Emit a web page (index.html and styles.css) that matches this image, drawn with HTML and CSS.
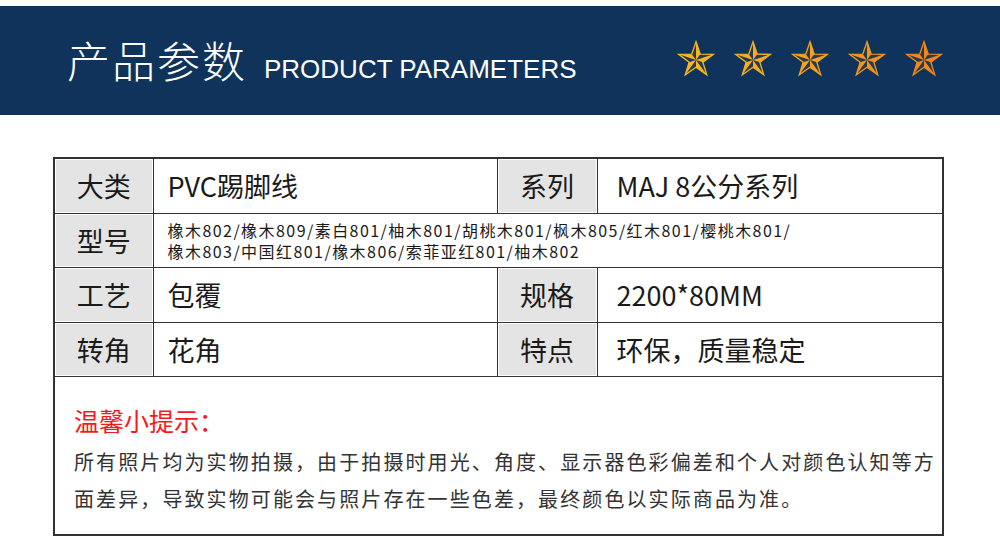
FILE: index.html
```html
<!DOCTYPE html>
<html lang="zh-CN">
<head>
<meta charset="utf-8">
<title>产品参数</title>
<link rel="stylesheet" href="styles.css">
</head>
<body>
<header class="banner">
  <div class="banner-title">
    <h1 class="title-cn">产品参数</h1>
    <span class="title-en">PRODUCT PARAMETERS</span>
  </div>
  <div class="stars">
    <svg class="star s1" viewBox="-50 -50 100 100">
      <path class="star-dark" d="M0 0L0 -48L-11.17 -15.37Z M0 0L45.65 -14.83L11.17 -15.37Z M0 0L28.21 38.83L18.07 5.87Z M0 0L-28.21 38.83L0 19Z M0 0L-45.65 -14.83L-18.07 5.87Z"/>
      <path class="star-half" d="M0 0L0 -48L11.17 -15.37Z M0 0L45.65 -14.83L18.07 5.87Z M0 0L28.21 38.83L0 19Z M0 0L-28.21 38.83L-18.07 5.87Z M0 0L-45.65 -14.83L-11.17 -15.37Z"/>
      <polygon class="star-outline" points="0,-48 11.17,-15.37 45.65,-14.83 18.07,5.87 28.21,38.83 0,19 -28.21,38.83 -18.07,5.87 -45.65,-14.83 -11.17,-15.37"/>
    </svg>
    <svg class="star s2" viewBox="-50 -50 100 100">
      <path class="star-dark" d="M0 0L0 -48L-11.17 -15.37Z M0 0L45.65 -14.83L11.17 -15.37Z M0 0L28.21 38.83L18.07 5.87Z M0 0L-28.21 38.83L0 19Z M0 0L-45.65 -14.83L-18.07 5.87Z"/>
      <path class="star-half" d="M0 0L0 -48L11.17 -15.37Z M0 0L45.65 -14.83L18.07 5.87Z M0 0L28.21 38.83L0 19Z M0 0L-28.21 38.83L-18.07 5.87Z M0 0L-45.65 -14.83L-11.17 -15.37Z"/>
      <polygon class="star-outline" points="0,-48 11.17,-15.37 45.65,-14.83 18.07,5.87 28.21,38.83 0,19 -28.21,38.83 -18.07,5.87 -45.65,-14.83 -11.17,-15.37"/>
    </svg>
    <svg class="star s3" viewBox="-50 -50 100 100">
      <path class="star-dark" d="M0 0L0 -48L-11.17 -15.37Z M0 0L45.65 -14.83L11.17 -15.37Z M0 0L28.21 38.83L18.07 5.87Z M0 0L-28.21 38.83L0 19Z M0 0L-45.65 -14.83L-18.07 5.87Z"/>
      <path class="star-half" d="M0 0L0 -48L11.17 -15.37Z M0 0L45.65 -14.83L18.07 5.87Z M0 0L28.21 38.83L0 19Z M0 0L-28.21 38.83L-18.07 5.87Z M0 0L-45.65 -14.83L-11.17 -15.37Z"/>
      <polygon class="star-outline" points="0,-48 11.17,-15.37 45.65,-14.83 18.07,5.87 28.21,38.83 0,19 -28.21,38.83 -18.07,5.87 -45.65,-14.83 -11.17,-15.37"/>
    </svg>
    <svg class="star s4" viewBox="-50 -50 100 100">
      <path class="star-dark" d="M0 0L0 -48L-11.17 -15.37Z M0 0L45.65 -14.83L11.17 -15.37Z M0 0L28.21 38.83L18.07 5.87Z M0 0L-28.21 38.83L0 19Z M0 0L-45.65 -14.83L-18.07 5.87Z"/>
      <path class="star-half" d="M0 0L0 -48L11.17 -15.37Z M0 0L45.65 -14.83L18.07 5.87Z M0 0L28.21 38.83L0 19Z M0 0L-28.21 38.83L-18.07 5.87Z M0 0L-45.65 -14.83L-11.17 -15.37Z"/>
      <polygon class="star-outline" points="0,-48 11.17,-15.37 45.65,-14.83 18.07,5.87 28.21,38.83 0,19 -28.21,38.83 -18.07,5.87 -45.65,-14.83 -11.17,-15.37"/>
    </svg>
    <svg class="star s5" viewBox="-50 -50 100 100">
      <path class="star-dark" d="M0 0L0 -48L-11.17 -15.37Z M0 0L45.65 -14.83L11.17 -15.37Z M0 0L28.21 38.83L18.07 5.87Z M0 0L-28.21 38.83L0 19Z M0 0L-45.65 -14.83L-18.07 5.87Z"/>
      <path class="star-half" d="M0 0L0 -48L11.17 -15.37Z M0 0L45.65 -14.83L18.07 5.87Z M0 0L28.21 38.83L0 19Z M0 0L-28.21 38.83L-18.07 5.87Z M0 0L-45.65 -14.83L-11.17 -15.37Z"/>
      <polygon class="star-outline" points="0,-48 11.17,-15.37 45.65,-14.83 18.07,5.87 28.21,38.83 0,19 -28.21,38.83 -18.07,5.87 -45.65,-14.83 -11.17,-15.37"/>
    </svg>
  </div>
</header>

<table class="params">
  <colgroup>
    <col class="c-label">
    <col class="c-value">
    <col class="c-label2">
    <col class="c-value2">
  </colgroup>
  <tbody>
    <tr>
      <th class="label">大类</th>
      <td class="value">PVC踢脚线</td>
      <th class="label">系列</th>
      <td class="value value-r">MAJ 8公分系列</td>
    </tr>
    <tr>
      <th class="label">型号</th>
      <td class="value small" colspan="3">
        <div class="small-line">橡木802/橡木809/素白801/柚木801/胡桃木801/枫木805/红木801/樱桃木801/</div>
        <div class="small-line">橡木803/中国红801/橡木806/索菲亚红801/柚木802</div>
      </td>
    </tr>
    <tr>
      <th class="label">工艺</th>
      <td class="value">包覆</td>
      <th class="label">规格</th>
      <td class="value value-r">2200*80MM</td>
    </tr>
    <tr>
      <th class="label">转角</th>
      <td class="value">花角</td>
      <th class="label">特点</th>
      <td class="value value-r">环保，质量稳定</td>
    </tr>
    <tr>
      <td class="notice" colspan="4">
        <div class="notice-inner">
          <div class="notice-title">温馨小提示：</div>
          <p class="notice-text">所有照片均为实物拍摄，由于拍摄时用光、角度、显示器色彩偏差和个人对颜色认知等方面差异，导致实物可能会与照片存在一些色差，最终颜色以实际商品为准。</p>
        </div>
      </td>
    </tr>
  </tbody>
</table>
</body>
</html>
```

FILE: styles.css
```css
html, body {
  margin: 0;
  padding: 0;
  background: #ffffff;
}

body {
  width: 1000px;
  height: 548px;
  overflow: hidden;
  font-family: "Noto Sans CJK SC", "Noto Sans", sans-serif;
  color: #1a1a1a;
}

.banner {
  margin-top: 6px;
  height: 109px;
  background: #10335b;
  display: flex;
  align-items: center;
  justify-content: space-between;
  padding: 0 57px 0 67px;
  box-sizing: border-box;
}

.banner-title {
  display: flex;
  align-items: baseline;
  margin-top: -2px;
}

.title-cn {
  margin: 0;
  font-family: "Noto Sans CJK SC", sans-serif;
  font-weight: 300;
  font-size: 43px;
  letter-spacing: 2px;
  color: #ffffff;
  line-height: 1;
}

.title-en {
  margin-left: 17px;
  font-family: "Liberation Sans", Arial, sans-serif;
  font-size: 26px;
  color: #ffffff;
  line-height: 1;
}

.stars {
  display: flex;
  gap: 19px;
  align-items: center;
  margin-top: -2px;
}

.star {
  width: 38px;
  height: 38px;
  display: block;
  overflow: visible;
}

.star-half {
  fill: currentColor;
}

.star-dark {
  fill: #2a3a4e;
}

.star-outline {
  fill: none;
  stroke: currentColor;
  stroke-width: 3.5;
  stroke-linejoin: miter;
}

.s1 { color: #f4b626; }
.s2 { color: #f5ad22; }
.s3 { color: #f4a11f; }
.s4 { color: #f2951e; }
.s5 { color: #f0881c; }

.params {
  margin: 42px 0 0 53px;
  width: 891px;
  border-collapse: collapse;
  table-layout: fixed;
  border: 2px solid #333333;
}

.c-label { width: 99px; }
.c-value { width: 344px; }
.c-label2 { width: 100px; }
.c-value2 { width: 346px; }

.params th,
.params td {
  border: 1px solid #333333;
  height: 53.5px;
  padding: 0;
  vertical-align: middle;
}

.label {
  background: #e4e4e4;
  box-shadow: inset 0 0 0 1px #ffffff;
  font-weight: 400;
  font-size: 27px;
  text-align: center;
  color: #1a1a1a;
}

.params .value {
  font-size: 27px;
  text-align: left;
  padding-left: 14px;
  color: #1a1a1a;
}

.params .value-r {
  padding-left: 19px;
}

.params td.small {
  font-size: 16px;
  letter-spacing: 1.45px;
  vertical-align: top;
  padding-top: 6px;
  height: 47.5px;
}

.small-line {
  line-height: 21px;
  height: 21px;
}

.params td.notice {
  height: auto;
  vertical-align: top;
  padding: 0;
}

.notice-inner {
  height: 157px;
  box-sizing: border-box;
  padding: 26px 0 0 19px;
}

.notice-title {
  font-family: "Noto Sans CJK SC", sans-serif;
  font-size: 25px;
  line-height: 34px;
  color: #f51a1a;
}

.notice-text {
  margin: 6px 0 0 0;
  font-family: "Noto Sans CJK SC", sans-serif;
  font-size: 20px;
  line-height: 37px;
  letter-spacing: 2.1px;
  color: #333333;
}
```
